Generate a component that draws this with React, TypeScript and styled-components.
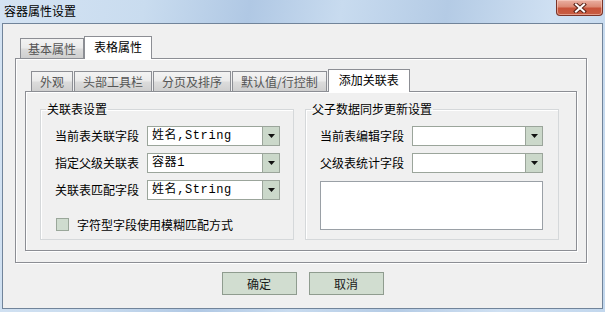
import { createGlobalStyle } from 'styled-components';
import styled from 'styled-components';

const GlobalStyle = createGlobalStyle`
    html, body {
        margin: 0;
        padding: 0;
        background: #c6d9ee;
    }
    * {
        box-sizing: border-box;
    }
`;

const FONT = `'Noto Sans CJK SC', 'Liberation Sans', sans-serif`;

const outerTabs = ['基本属性', '表格属性'];
const innerTabs = ['外观', '头部工具栏', '分页及排序', '默认值/行控制', '添加关联表'];

const DropArrow = () => (
    <svg width='7' height='4' viewBox='0 0 7 4'>
        <path d='M0 0 H7 L3.5 4 Z' fill='#111' />
    </svg>
);

const CloseGlyph = () => (
    <svg width='14' height='10' viewBox='0 0 14 10'>
        <path d='M3 1.5 L11 8.5 M11 1.5 L3 8.5' stroke='#5a2318' strokeWidth='4' strokeLinecap='square' />
        <path d='M3 1.5 L11 8.5 M11 1.5 L3 8.5' stroke='#ffffff' strokeWidth='2' strokeLinecap='square' />
    </svg>
);

const Combo = ({ value, width }: { value?: string; width: number }) => (
    <ComboBox style={{ width }}>
        <ComboText>{value}</ComboText>
        <ComboButton>
            <DropArrow />
        </ComboButton>
    </ComboBox>
);

const App = () => {
    return (
        <>
            <GlobalStyle />
            <Window>
                <TitleBar>
                    <Title>容器属性设置</Title>
                    <CloseButton>
                        <CloseGlyph />
                    </CloseButton>
                </TitleBar>
                <Body>
                    <TabStrip $indent={5} $gap={0}>
                        {outerTabs.map((t, i) => (
                            <Tab key={t} $active={i === 1} $pad={7}>
                                {t}
                            </Tab>
                        ))}
                    </TabStrip>
                    <OuterPanel>
                        <TabStrip $indent={6} $gap={1}>
                            {innerTabs.map((t, i) => (
                                <Tab key={t} $active={i === innerTabs.length - 1} $pad={8}>
                                    {t}
                                </Tab>
                            ))}
                        </TabStrip>
                        <InnerPanel>
                            <Group>
                                <Legend>关联表设置</Legend>
                                <FieldGrid>
                                    <Label>当前表关联字段</Label>
                                    <Combo value='姓名,String' width={133} />
                                    <Label>指定父级关联表</Label>
                                    <Combo value='容器1' width={133} />
                                    <Label>关联表匹配字段</Label>
                                    <Combo value='姓名,String' width={133} />
                                </FieldGrid>
                                <CheckRow>
                                    <CheckBox />
                                    <span>字符型字段使用模糊匹配方式</span>
                                </CheckRow>
                            </Group>
                            <Group>
                                <Legend>父子数据同步更新设置</Legend>
                                <FieldGrid>
                                    <Label>当前表编辑字段</Label>
                                    <Combo width={131} />
                                    <Label>父级表统计字段</Label>
                                    <Combo width={131} />
                                    <TextArea />
                                </FieldGrid>
                            </Group>
                        </InnerPanel>
                    </OuterPanel>
                    <ButtonRow>
                        <DialogButton>确定</DialogButton>
                        <DialogButton>取消</DialogButton>
                    </ButtonRow>
                </Body>
            </Window>
        </>
    );
};

export default App;

const Window = styled.div`
    width: 605px;
    height: 312px;
    display: flex;
    flex-direction: column;
    padding: 0 2px 3px 2px;
    font-family: ${FONT};
    font-size: 12px;
    color: #000;
    background: linear-gradient(
        100deg,
        #d4e3f3 0%,
        #c9dcef 22%,
        #b0c8e4 38%,
        #c8dbef 52%,
        #b4cbe5 68%,
        #cfe0f2 84%,
        #c2d7ed 100%
    );
`;

const TitleBar = styled.div`
    height: 23px;
    display: flex;
    justify-content: space-between;
    align-items: flex-start;
    padding-left: 2px;
`;

const Title = styled.div`
    font-size: 12px;
    line-height: 22px;
    color: #000;
`;

const CloseButton = styled.div`
    width: 47px;
    height: 16px;
    display: flex;
    align-items: center;
    justify-content: center;
    border: 1px solid #7a3428;
    border-top: none;
    border-radius: 0 0 4px 4px;
    background: linear-gradient(#eab0a2 0%, #dc8a75 45%, #c8533a 55%, #c75d43 100%);
    box-shadow: inset 0 0 0 1px rgba(255, 220, 210, 0.5);
`;

const Body = styled.div`
    flex: 1;
    border: 1px solid #71849a;
    background: #f0f0f0;
    padding: 12px 15px 0 12px;
    display: flex;
    flex-direction: column;
`;

const TabStrip = styled.div<{ $indent: number; $gap: number }>`
    display: flex;
    align-items: flex-end;
    gap: ${p => p.$gap}px;
    height: 22px;
    padding-left: ${p => p.$indent}px;
    position: relative;
    z-index: 1;
`;

const Tab = styled.div<{ $active?: boolean; $pad: number }>`
    height: ${p => (p.$active ? 23 : 20)}px;
    margin-bottom: ${p => (p.$active ? -1 : 0)}px;
    padding: 0 ${p => (p.$active ? p.$pad + 2 : p.$pad)}px;
    display: flex;
    align-items: center;
    white-space: nowrap;
    border: 1px solid #8c8e94;
    border-bottom: none;
    color: ${p => (p.$active ? '#000' : '#555')};
    background: ${p => (p.$active ? '#ffffff' : 'linear-gradient(#f3f3f3 0%, #ebebeb 45%, #dbdbdb 55%, #cfcfcf 100%)')};
    padding-bottom: ${p => (p.$active ? 3 : 0)}px;
`;

const OuterPanel = styled.div`
    width: 572px;
    height: 205px;
    border: 1px solid #8c8e94;
    box-shadow: 1px 1px 0 #ffffff, inset 1px 1px 0 #ffffff;
    padding: 10px 9px 10px 9px;
    display: flex;
    flex-direction: column;
`;

const InnerPanel = styled.div`
    height: 160px;
    border: 1px solid #8c8e94;
    box-shadow: 1px 1px 0 #ffffff, inset 1px 1px 0 #ffffff;
    padding: 9px 16px 10px 14px;
    display: grid;
    grid-template-columns: 254px 254px;
    column-gap: 11px;
`;

const Group = styled.fieldset`
    margin: 0;
    min-width: 0;
    padding: 9px 0 0 14px;
    border: 1px solid #d5d8da;
    box-shadow: inset 1px 1px 0 #ffffff;
`;

const Legend = styled.legend`
    margin-left: -9px;
    padding: 0 1px;
    line-height: 16px;
    font-size: 12px;
`;

const FieldGrid = styled.div`
    display: grid;
    grid-template-columns: 92px auto;
    grid-auto-rows: 20px;
    row-gap: 7px;
    align-items: center;
    justify-content: start;
`;

const Label = styled.div`
    font-size: 12px;
    line-height: 20px;
    white-space: nowrap;
`;

const ComboBox = styled.div`
    height: 20px;
    display: flex;
    background: #ffffff;
    border: 1px solid #9ba59b;
`;

const ComboText = styled.div`
    flex: 1;
    padding-left: 4px;
    line-height: 18px;
    font-family: 'Liberation Mono', 'Noto Sans CJK SC', monospace;
    font-size: 12px;
    letter-spacing: 0.6px;
    white-space: nowrap;
    overflow: hidden;
`;

const ComboButton = styled.div`
    width: 17px;
    display: flex;
    align-items: center;
    justify-content: center;
    background: #cbd8ca;
    border-left: 1px solid #9ba59b;
`;

const TextArea = styled.div`
    grid-column: 1 / span 2;
    grid-row: span 2;
    height: 49px;
    align-self: start;
    background: #ffffff;
    border: 1px solid #9aa0a6;
    margin-top: 1px;
`;

const CheckRow = styled.div`
    display: flex;
    align-items: center;
    gap: 8px;
    margin-top: 16px;
    padding-left: 1px;
    font-size: 12px;
`;

const CheckBox = styled.div`
    width: 13px;
    height: 13px;
    background: #cfdccf;
    border: 1px solid #9aa79a;
`;

const ButtonRow = styled.div`
    display: flex;
    justify-content: center;
    gap: 12px;
    margin-top: 9px;
    margin-left: -12px;
    margin-right: -15px;
`;

const DialogButton = styled.div`
    width: 75px;
    height: 23px;
    display: flex;
    align-items: center;
    justify-content: center;
    background: #d1ddd0;
    border: 1px solid #8f9c8f;
    font-size: 12px;
    color: #1a1a1a;
`;
